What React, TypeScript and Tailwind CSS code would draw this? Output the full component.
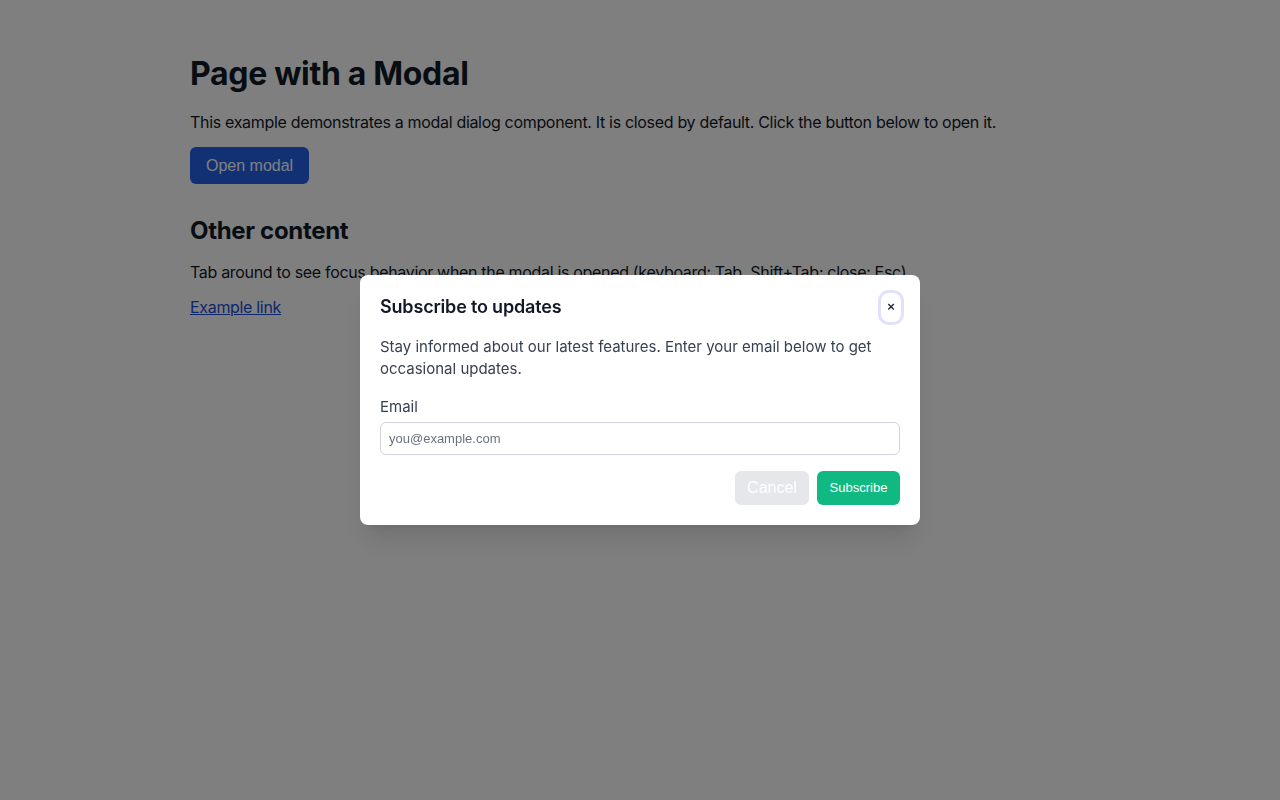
export default function App() {
  return (
    <div className="relative min-h-[800px] bg-white font-['Inter',sans-serif] text-[#111827]">
      {/* Page */}
      <main className="mx-auto max-w-[900px] pt-[54px] tracking-[-0.02em]">
        <h1 className="text-[32px] font-bold leading-[40px]">
          Page with a Modal
        </h1>
        <p className="mt-[16px] text-[16px] leading-[24px]">
          This example demonstrates a modal dialog component. It is closed by
          default. Click the button below to open it.
        </p>
        <button className="mt-[13px] h-[37px] rounded-md bg-[#2563eb] px-4 font-['Liberation_Sans',Arial,sans-serif] text-[16px] tracking-normal text-white">
          Open modal
        </button>

        <h2 className="mt-[31px] text-[24px] font-bold leading-[32px]">
          Other content
        </h2>
        <p className="mt-[13px] text-[16px] leading-[24px]">
          Tab around to see focus behavior when the modal is opened (keyboard:
          Tab, Shift+Tab; close: Esc).
        </p>
        <a
          href="#"
          className="mt-[11px] inline-block text-[16px] leading-[24px] text-[#1d4ed8] underline"
        >
          Example link
        </a>
      </main>

      {/* Overlay */}
      <div className="fixed inset-0 flex items-center justify-center bg-black/50">
        <div
          role="dialog"
          className="w-[560px] rounded-lg bg-white p-5 shadow-xl"
        >
          <div className="flex h-6 items-center justify-between">
            <h3 className="text-[18px] font-semibold leading-[24px] tracking-[-0.01em] text-[#111827]">
              Subscribe to updates
            </h3>
            <button className="mr-[-1px] flex h-[29px] w-[20px] items-center justify-center rounded-lg font-['Liberation_Sans',Arial,sans-serif] text-[13px] font-bold text-[#1f2937] ring-[3px] ring-[#e1e1fb]">
              ×
            </button>
          </div>
          <p className="mt-[17px] text-[15px] leading-[22px] text-[#374151]">
            Stay informed about our latest features. Enter your email below to
            get occasional updates.
          </p>
          <label className="mt-[17px] block text-[15px] leading-[20px] text-[#374151]">
            Email
          </label>
          <input
            type="email"
            placeholder="you@example.com"
            className="mt-[5px] block h-[33px] w-full rounded-md border border-[#d1d5db] px-2 font-['Liberation_Sans',Arial,sans-serif] text-[13px] text-[#111827] placeholder:text-[#6b7280] outline-none"
          />
          <div className="mt-4 flex justify-end gap-2">
            <button className="h-[34px] w-[74px] rounded-md bg-[#e5e7eb] font-['Liberation_Sans',Arial,sans-serif] text-[16px] text-white">
              Cancel
            </button>
            <button className="h-[34px] w-[83px] rounded-md bg-[#10b981] font-['Liberation_Sans',Arial,sans-serif] text-[13px] text-white">
              Subscribe
            </button>
          </div>
        </div>
      </div>
    </div>
  );
}
